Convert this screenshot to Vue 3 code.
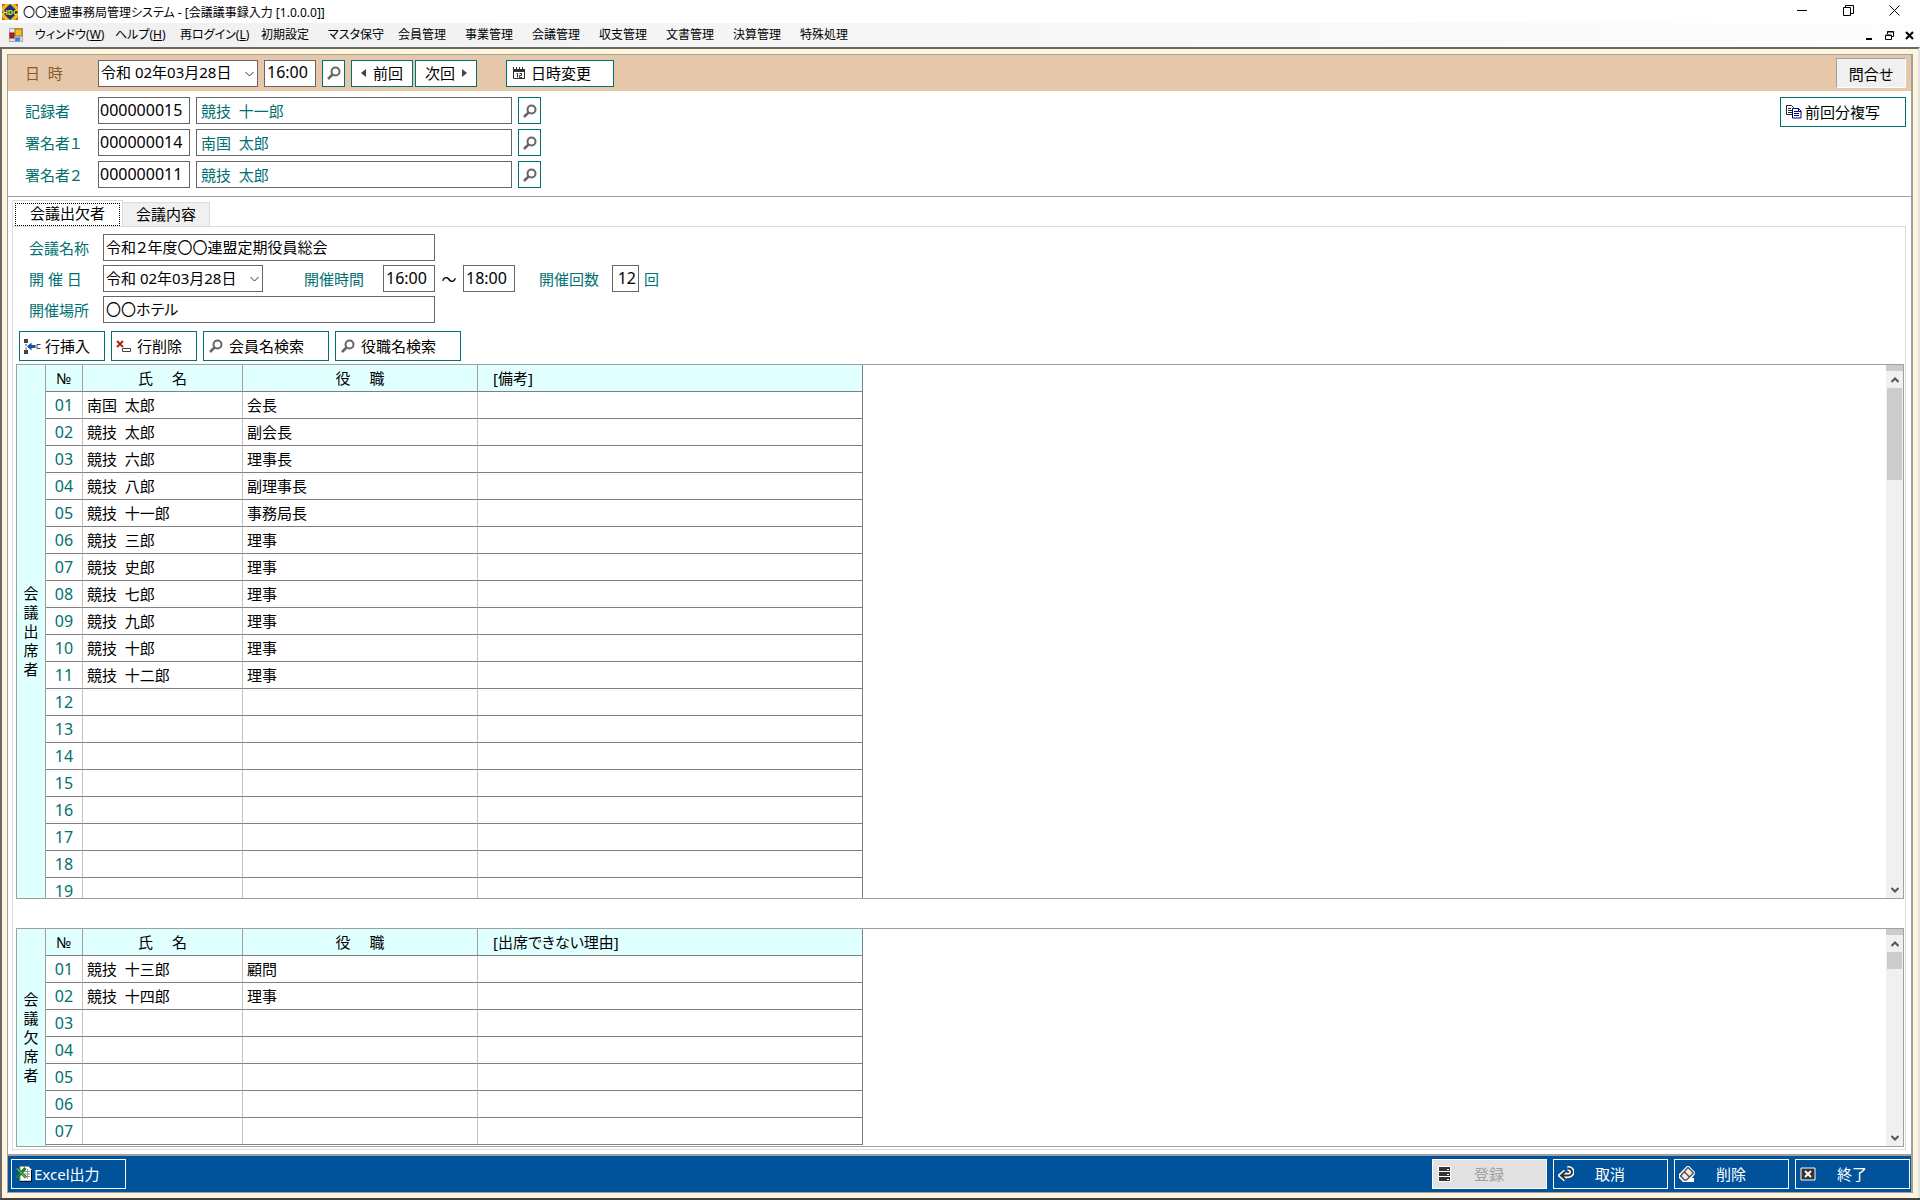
<script setup>
import { ref } from 'vue'

const menus = [
  { label: 'ウィンドウ', key: 'W' },
  { label: 'ヘルプ', key: 'H' },
  { label: '再ログイン', key: 'L' },
  { label: '初期設定' },
  { label: 'マスタ保守' },
  { label: '会員管理' },
  { label: '事業管理' },
  { label: '会議管理' },
  { label: '収支管理' },
  { label: '文書管理' },
  { label: '決算管理' },
  { label: '特殊処理' }
]

const meetingDate = ref('令和 02年03月28日')
const meetingTime = ref('16:00')

const staff = ref([
  { id: 'recorder', label: '記録者', code: '000000015', name: '競技  十一郎' },
  { id: 'signer1', label: '署名者１', code: '000000014', name: '南国  太郎' },
  { id: 'signer2', label: '署名者２', code: '000000011', name: '競技  太郎' }
])

const activeTab = ref('members')

const detail = ref({
  title: '令和２年度〇〇連盟定期役員総会',
  date: '令和 02年03月28日',
  from: '16:00',
  to: '18:00',
  count: '12',
  place: '〇〇ホテル'
})

const attendees = [
  ['南国  太郎', '会長'],
  ['競技  太郎', '副会長'],
  ['競技  六郎', '理事長'],
  ['競技  八郎', '副理事長'],
  ['競技  十一郎', '事務局長'],
  ['競技  三郎', '理事'],
  ['競技  史郎', '理事'],
  ['競技  七郎', '理事'],
  ['競技  九郎', '理事'],
  ['競技  十郎', '理事'],
  ['競技  十二郎', '理事']
]

const absentees = [
  ['競技  十三郎', '顧問'],
  ['競技  十四郎', '理事']
]

// 空行を足して指定行数にそろえる
const fillRows = (list, count) =>
  Array.from({ length: count }, (_, i) => ({
    no: String(i + 1).padStart(2, '0'),
    name: list[i]?.[0] ?? '',
    post: list[i]?.[1] ?? ''
  }))

const grids = [
  { id: 'present', title: '会議出席者', note: '[備考]', rows: fillRows(attendees, 19) },
  { id: 'absent', title: '会議欠席者', note: '[出席できない理由]', rows: fillRows(absentees, 7) }
]
</script>

<template>
  <div class="window">
    <header class="title-bar">
      <svg class="app-logo" viewBox="0 0 16 16" width="16" height="16">
        <rect width="16" height="16" fill="#f5b51e" />
        <path d="M0 0h3L0 3zM16 0v3l-3-3zM0 16v-3l3 3zM16 16h-3l3-3z" fill="#d9481c" />
        <path d="M8 0l8 8-8 8-8-8z" fill="#12337f" />
        <path d="M2 6h12v5H2z" fill="#12337f" />
        <text x="8" y="11" text-anchor="middle" font-size="7" font-weight="bold" fill="#ffe600">HDC</text>
      </svg>
      <span class="title-text">〇〇連盟事務局管理システム - [会議議事録入力 [1.0.0.0]]</span>
      <div class="window-controls">
        <button aria-label="最小化">
          <svg viewBox="0 0 11 11" width="11" height="11"><path d="M0 5.500h10" stroke="#000" /></svg>
        </button>
        <button aria-label="元に戻す">
          <svg viewBox="0 0 11 11" width="11" height="11" fill="none" stroke="#000">
            <path d="M.5 2.500h7v8h-7zM2.500 2.500v-2h8v8h-3" />
          </svg>
        </button>
        <button aria-label="閉じる">
          <svg viewBox="0 0 11 11" width="11" height="11"><path d="M.5.5l10 10M10.500.5l-10 10" stroke="#000" /></svg>
        </button>
      </div>
    </header>

    <nav class="menu-bar">
      <svg class="form-icon" viewBox="0 0 14 14" width="14" height="14">
        <rect x=".5" y=".5" width="13" height="13" fill="#e8e8e8" stroke="#aaa" />
        <rect x="6" y="1" width="7" height="7" fill="#f2bf2b" stroke="#9b7410" />
        <rect x="1" y="5" width="4" height="5" fill="#c8221b" stroke="#7e1511" />
        <rect x="6" y="9.500" width="5" height="4" fill="#3f7ee0" stroke="#7ca5e8" />
      </svg>
      <div class="menu-list">
        <button v-for="menu in menus" :key="menu.label">{{ menu.label }}<template v-if="menu.key">(<u>{{ menu.key }}</u>)</template></button>
      </div>
      <div class="child-controls">
        <button aria-label="子画面を最小化">
          <svg viewBox="0 0 9 9" width="9" height="9"><path d="M1 8h6" stroke="#000" stroke-width="2" /></svg>
        </button>
        <button aria-label="子画面を元に戻す">
          <svg viewBox="0 0 9 9" width="9" height="9" fill="none" stroke="#000">
            <path d="M.5 4.500h6v4h-6zM.5 4h6M2.500 3v-2.500h6v5h-2M2.500 1h6" />
          </svg>
        </button>
        <button aria-label="子画面を閉じる">
          <svg viewBox="0 0 9 9" width="9" height="9"><path d="M1 1l7 7M8 1l-7 7" stroke="#000" stroke-width="2" /></svg>
        </button>
      </div>
    </nav>

    <main class="mdi">
      <div class="frame">
        <section class="date-bar">
          <label for="meeting-date">日 &nbsp;時</label>
          <span class="date-select">
            <select id="meeting-date" v-model="meetingDate">
              <option>令和 02年03月28日</option>
            </select>
            <svg viewBox="0 0 9 6" width="9" height="6"><path d="M.5 1l4 4 4-4" fill="none" stroke="#333" /></svg>
          </span>
          <input v-model="meetingTime" class="box time" aria-label="時刻" />
          <button class="btn search" aria-label="日時検索">
            <svg viewBox="0 0 14 14" width="14" height="14" fill="none" stroke="#666">
              <circle cx="8.500" cy="5.500" r="4" stroke-width="2" /><path d="M5.500 8.500L1 13" stroke-width="2.500" />
            </svg>
          </button>
          <div class="pager">
            <button class="btn page-btn">
              <svg viewBox="0 0 5 8" width="5" height="8"><path d="M5 0v8L0 4z" fill="#444" /></svg>前回
            </button>
            <button class="btn page-btn">
              次回<svg viewBox="0 0 5 8" width="5" height="8"><path d="M0 0v8l5-4z" fill="#444" /></svg>
            </button>
          </div>
          <button class="btn change-btn">
            <svg viewBox="0 0 12 12" width="12" height="12">
              <path d="M.5 2.500h11v9H.5z" fill="#fff" stroke="#333" />
              <path d="M0 2h12v3H0z" fill="#333" />
              <path d="M.5 0v3M3.500 0v3M6.500 0v3M9.500 0v3" stroke="#333" />
              <path d="M3.500 6.500h1v4M6.500 6.500h2v2h-2v2h2.500" fill="none" stroke="#333" />
            </svg>日時変更
          </button>
          <button class="inquiry">問合せ</button>
        </section>

        <section class="staff-area">
          <div class="staff-list">
            <div v-for="row in staff" :key="row.id" class="staff-row">
              <label :for="row.id">{{ row.label }}</label>
              <input :id="row.id" v-model="row.code" class="box code" />
              <input v-model="row.name" class="box name" :aria-label="row.label + '氏名'" />
              <button class="btn search" :aria-label="row.label + '検索'">
                <svg viewBox="0 0 14 14" width="14" height="14" fill="none" stroke="#666">
                  <circle cx="8.500" cy="5.500" r="4" stroke-width="2" /><path d="M5.500 8.500L1 13" stroke-width="2.500" />
                </svg>
              </button>
            </div>
          </div>
          <button class="btn copy-btn">
            <svg viewBox="0 0 16 14" width="16" height="14">
              <path d="M.5.500h5l2 2v7h-7z" fill="#fff" stroke="#222" />
              <path d="M2 3.500h3M2 5.500h4M2 7.500h4" stroke="#222" />
              <path d="M6.500 3.500h6l2.500 2.500v7h-8.500z" fill="#fff" stroke="#00007b" />
              <path d="M8 6.500h4M8 8.500h5M8 10.500h5M12.500 3.500v3h2.500" fill="none" stroke="#00007b" />
            </svg>前回分複写
          </button>
        </section>

        <div class="tabs" role="tablist">
          <button role="tab" :class="{ active: activeTab === 'members' }" @click="activeTab = 'members'">
            <span>会議出欠者</span>
          </button>
          <button role="tab" :class="{ active: activeTab === 'contents' }" @click="activeTab = 'contents'">
            <span>会議内容</span>
          </button>
        </div>

        <section class="tab-page">
          <div class="fields">
            <div class="field-row">
              <label for="title">会議名称</label>
              <input id="title" v-model="detail.title" class="box wide" />
            </div>
            <div class="field-row">
              <label for="date">開 催 日</label>
              <span class="date-select">
                <select id="date" v-model="detail.date">
                  <option>令和 02年03月28日</option>
                </select>
                <svg viewBox="0 0 9 6" width="9" height="6"><path d="M.5 1l4 4 4-4" fill="none" stroke="#333" /></svg>
              </span>
              <label for="from" class="time-label">開催時間</label>
              <input id="from" v-model="detail.from" class="box time" />
              <span class="tilde">～</span>
              <input v-model="detail.to" class="box time" aria-label="終了時間" />
              <label for="count" class="count-label">開催回数</label>
              <input id="count" v-model="detail.count" class="box count" />
              <span class="unit">回</span>
            </div>
            <div class="field-row">
              <label for="place">開催場所</label>
              <input id="place" v-model="detail.place" class="box wide" />
            </div>
          </div>

          <div class="tools">
            <button class="btn row-btn">
              <svg viewBox="0 0 17 15" width="17" height="15">
                <path d="M0 0h4v4H0zM0 11h4v4H0z" fill="#444" />
                <path d="M2 5v2M2 8.500v2" stroke="#444" />
                <path d="M3 7.500l4.500-4v2.500h4v3h-4v2.500z" fill="#0b53a5" />
                <path d="M16.500 5.500h-3.500v4h3.500" fill="none" stroke="#444" />
              </svg>行挿入
            </button>
            <button class="btn row-btn">
              <svg viewBox="0 0 17 15" width="17" height="15">
                <path d="M1 2l6 6M7 2l-6 6" stroke="#a82a1a" stroke-width="2" />
                <path d="M6.500 9.500h8v3h-8z" fill="#fff" stroke="#444" />
              </svg>行削除
            </button>
            <button v-for="label in ['会員名検索', '役職名検索']" :key="label" class="btn find-btn">
              <svg viewBox="0 0 14 14" width="14" height="14" fill="none" stroke="#666">
                <circle cx="8.500" cy="5.500" r="4" stroke-width="2" /><path d="M5.500 8.500L1 13" stroke-width="2.500" />
              </svg>{{ label }}
            </button>
          </div>

          <div v-for="grid in grids" :key="grid.id" class="grid" :class="grid.id">
            <div class="grid-title"><span>{{ grid.title }}</span></div>
            <div class="grid-body">
              <table>
                <colgroup>
                  <col class="col-no" />
                  <col class="col-name" />
                  <col class="col-post" />
                  <col class="col-note" />
                </colgroup>
                <thead>
                  <tr>
                    <th class="no">№</th>
                    <th>氏　 名</th>
                    <th>役　 職</th>
                    <th class="note">{{ grid.note }}</th>
                  </tr>
                </thead>
                <tbody>
                  <tr v-for="row in grid.rows" :key="row.no">
                    <td class="no">{{ row.no }}</td>
                    <td>{{ row.name }}</td>
                    <td>{{ row.post }}</td>
                    <td></td>
                  </tr>
                </tbody>
              </table>
            </div>
            <div class="scrollbar">
              <div class="splitter"></div>
              <button aria-label="上へ">
                <svg viewBox="0 0 8 6" width="8" height="6"><path d="M.5 5L4 1.500 7.500 5" fill="none" stroke="#555" stroke-width="2" /></svg>
              </button>
              <div class="thumb"></div>
              <button class="down" aria-label="下へ">
                <svg viewBox="0 0 8 6" width="8" height="6"><path d="M.5 1L4 4.500 7.500 1" fill="none" stroke="#555" stroke-width="2" /></svg>
              </button>
            </div>
          </div>
        </section>

        <footer class="actions">
          <button class="excel">
            <svg viewBox="0 0 17 16" width="17" height="16">
              <path d="M4 .5h8.500l3 3V15H4z" fill="#fff" stroke="#999" />
              <path d="M15.500 4v11.500H4" fill="none" stroke="#111" />
              <path d="M8 5.500h6M8 8h6M8 10.500h6M11.500 3v10" stroke="#999" />
              <path d="M1 2.500l9 9M9.500 2l-9 10" stroke="#1c7a2c" stroke-width="3" />
              <path d="M1 2.500l9 9" stroke="#8fce8f" />
            </svg>Excel出力
          </button>
          <button class="entry" disabled>
            <svg viewBox="0 0 16 16" width="16" height="16">
              <path d="M1 0h13v16H1z" fill="#fff" />
              <path d="M2 1h11v4H2zM2 6h11v4H2zM2 11h11v4H2z" fill="#333" />
              <path d="M10 3.500h2M10 8.500h2M10 13.500h2" stroke="#fff" />
            </svg>
            <span>登録</span>
          </button>
          <button class="cancel">
            <svg viewBox="0 0 16 16" width="16" height="16" fill="none">
              <path d="M9.500 2.500c6-.5 6 7 .5 7H4M7.500 5.500l-4.500 4 4.500 4" stroke="#fff" stroke-width="5" />
              <path d="M9.500 2.500c6-.5 6 7 .5 7H4M7.500 5.500l-4.500 4 4.500 4" stroke="#333" stroke-width="2" />
            </svg>
            <span>取消</span>
          </button>
          <button class="delete">
            <svg viewBox="0 0 16 16" width="16" height="16">
              <path d="M8 0h2l6 6v2l-3 4h2v4H4l-4-4V8z" fill="#fff" />
              <path d="M9 1.500l5.500 5.500-7 7H5.500L1.500 10zM5 5.500l5.500 5.500" fill="#eee" stroke="#555" stroke-width="1.500" />
            </svg>
            <span>削除</span>
          </button>
          <button class="quit">
            <svg viewBox="0 0 16 16" width="16" height="16">
              <path d="M1 2h14v12H1z" fill="#333" stroke="#fff" />
              <path d="M5 5l6 6M11 5l-6 6" stroke="#fff" stroke-width="2" />
            </svg>
            <span>終了</span>
          </button>
        </footer>
      </div>
    </main>
  </div>
</template>

<style>
body {
  margin: 0;
}
</style>

<style scoped>
.window {
  display: flex;
  flex-direction: column;
  height: 100vh;
  box-sizing: border-box;
  border-bottom: 2px solid #444;
  background: #fff;
  color: #000;
  font-family: "Noto Sans", "Noto Sans CJK JP", sans-serif;
  font-size: 15px;
  font-feature-settings: "palt";
  overflow: hidden;
}

.window * {
  box-sizing: border-box;
}

button,
input,
select {
  margin: 0;
  padding: 0;
  border: 0;
  background: none;
  color: inherit;
  font: inherit;
  font-feature-settings: inherit;
  white-space: nowrap;
}

svg {
  flex: none;
  display: block;
}

.title-bar {
  display: flex;
  align-items: center;
  height: 23px;
  padding: 0 3px 0 2px;
  font-size: 12px;
}

.title-text {
  margin-left: 5px;
}

.window-controls,
.child-controls {
  display: flex;
  margin-left: auto;
}

.window-controls button {
  display: flex;
  justify-content: center;
  align-items: center;
  width: 46px;
  height: 23px;
  padding-bottom: 2px;
}

.menu-bar {
  display: flex;
  align-items: center;
  height: 24px;
  padding: 0 1px 0 9px;
  background: linear-gradient(90deg, #f0f0f0, #fdfdfd);
  font-size: 12px;
}

.menu-list {
  display: grid;
  grid-template-columns: 80px 65px 81px 67px 70px repeat(7, 67px);
  margin-left: 12px;
}

.menu-list button {
  padding-bottom: 2px;
  text-align: left;
}

.child-controls button {
  display: flex;
  justify-content: center;
  align-items: center;
  width: 20px;
  height: 20px;
}

.mdi {
  flex: 1;
  display: flex;
  min-height: 0;
  padding: 5px;
  border: 2px solid #696969;
  border-right-color: #e3e3e3;
  border-bottom: 0;
  background: #fff5dc;
}

.frame {
  flex: 1;
  display: flex;
  flex-direction: column;
  min-width: 0;
  border: 1px solid #a0a0a0;
  border-right-width: 2px;
  background: #fff;
}

.date-bar {
  display: flex;
  align-items: center;
  gap: 6px;
  height: 36px;
  padding: 0 5px 0 17px;
  background: #e6c7aa;
}

.date-bar label {
  width: 67px;
  padding-bottom: 2px;
  color: #8b5a2b;
}

.date-select {
  position: relative;
  width: 160px;
  height: 27px;
}

.date-select select {
  width: 100%;
  height: 100%;
  padding: 0 20px 2px 2px;
  border: 1px solid #666;
  border-radius: 0;
  background: #fff;
  color: #000;
  appearance: none;
}

.date-select svg {
  position: absolute;
  top: 11px;
  right: 4px;
  pointer-events: none;
}

.box {
  height: 27px;
  padding: 0 2px 2px;
  border: 1px solid #666;
  background: #fff;
  color: #000;
}

.box.time {
  width: 52px;
  font-size: 16px;
}

.btn {
  display: flex;
  align-items: center;
  height: 27px;
  padding-bottom: 2px;
  border: 1px solid #007070;
  background: #fff;
  color: #000;
}

.btn svg,
.actions svg {
  margin-top: 2px;
}

.btn.search {
  justify-content: center;
  width: 23px;
}

.pager {
  display: flex;
  gap: 2px;
}

.page-btn {
  justify-content: center;
  gap: 7px;
  width: 62px;
}

.change-btn {
  gap: 6px;
  width: 108px;
  margin-left: 23px;
  padding-left: 6px;
}

.inquiry {
  width: 70px;
  height: 30px;
  margin-left: auto;
  border: 1px solid #fff;
  border-top-color: #a0a0a0;
  border-left-color: #a0a0a0;
  background: #f0f0f0;
}

.staff-area {
  display: flex;
  justify-content: space-between;
  align-items: flex-start;
  padding: 6px 5px 8px 17px;
  border-bottom: 1px solid #a0a0a0;
  color: #007070;
}

.staff-list {
  display: flex;
  flex-direction: column;
  gap: 5px;
}

.staff-row {
  display: flex;
  align-items: center;
  gap: 6px;
}

.staff-row label {
  width: 67px;
}

.box.code {
  width: 92px;
  padding-left: 1px;
  font-size: 16px;
}

.box.name {
  width: 316px;
  padding: 0 4px;
  color: #007070;
}

.copy-btn {
  gap: 3px;
  width: 126px;
  height: 30px;
  padding-left: 5px;
}

.tabs {
  display: flex;
  align-items: flex-end;
  height: 29px;
  padding-left: 4px;
}

.tabs button {
  height: 24px;
  padding: 0 13px 2px;
  border: 1px solid #dcdcdc;
  border-bottom: 0;
  border-left: 0;
  background: #f0f0f0;
}

.tabs .active {
  height: 26px;
  padding: 2px 2px 0;
  border-left: 1px solid #dcdcdc;
  background: #fff;
}

.tabs .active span {
  display: block;
  height: 23px;
  padding: 0 14px;
  border: 1px dotted #000;
  line-height: 19px;
}

.tab-page {
  flex: 1;
  display: flex;
  flex-direction: column;
  min-height: 0;
  margin: 0 5px 4px 4px;
  padding: 7px 1px 2px 3px;
  border: 1px solid #dcdcdc;
}

.fields {
  display: flex;
  flex-direction: column;
  gap: 4px;
  padding-left: 13px;
}

.field-row {
  display: flex;
  align-items: center;
  color: #007070;
}

.field-row label {
  width: 74px;
  padding-bottom: 1px;
}

.box.wide {
  width: 332px;
}

.field-row .time-label {
  width: 79px;
  margin-left: 41px;
}

.tilde {
  width: 28px;
  color: #000;
  text-align: center;
}

.field-row .count-label {
  width: 73px;
  margin-left: 24px;
}

.box.count {
  width: 27px;
  font-size: 16px;
  text-align: right;
}

.unit {
  margin-left: 5px;
}

.tools {
  display: flex;
  gap: 6px;
  margin: 8px 0 3px;
  padding-left: 3px;
}

.tools .btn {
  height: 30px;
}

.row-btn {
  gap: 4px;
  width: 86px;
  padding-left: 4px;
}

.find-btn {
  gap: 6px;
  width: 126px;
  padding-left: 5px;
}

.grid {
  flex: 1;
  display: flex;
  min-height: 0;
  border: 1px solid #a0a0a0;
}

.grid.absent {
  flex: none;
  height: 219px;
  margin-top: 29px;
}

.grid-title {
  display: flex;
  justify-content: center;
  align-items: center;
  width: 29px;
  border-right: 1px solid #a0a0a0;
  background: #e0ffff;
}

.grid-title span {
  width: 15px;
  line-height: 19px;
  word-break: break-all;
}

.grid-body {
  flex: 1;
  min-width: 0;
  overflow: hidden;
}

table {
  width: 817px;
  table-layout: fixed;
  border-spacing: 0;
}

.col-no {
  width: 37px;
}

.col-name {
  width: 160px;
}

.col-post {
  width: 235px;
}

.col-note {
  width: 385px;
}

th,
td {
  height: 27px;
  padding: 0 0 0 4px;
  border-right: 1px solid #c0c0c0;
  border-bottom: 1px solid #808080;
  font-weight: normal;
  line-height: 20px;
  white-space: pre;
}

th {
  padding: 0;
  border-right-color: #a0a0a0;
  background: #e0ffff;
}

th:last-child,
td:last-child {
  border-right-color: #808080;
}

.note {
  padding-left: 15px;
  text-align: left;
}

.no {
  padding: 0;
  text-align: center;
}

td.no {
  color: #007070;
  font-size: 16px;
}

.scrollbar {
  display: flex;
  flex-direction: column;
  width: 17px;
  background: #f0f0f0;
}

.splitter {
  height: 6px;
  background: #ccc;
}

.scrollbar button {
  display: flex;
  justify-content: center;
  align-items: center;
  height: 17px;
}

.scrollbar .down {
  margin-top: auto;
}

.thumb {
  height: 92px;
  margin: 0 1px;
  background: #cdcdcd;
}

.absent .thumb {
  height: 17px;
}

.actions {
  display: flex;
  align-items: center;
  gap: 6px;
  height: 38px;
  padding: 0 1px 0 3px;
  border-top: 2px solid #a0a0a0;
  background: #00529b;
}

.actions button {
  display: flex;
  align-items: center;
  width: 115px;
  height: 30px;
  padding: 0 0 2px 4px;
  border: 1px solid #fff;
  color: #fff;
}

.actions span {
  margin-left: 21px;
}

.actions .excel {
  gap: 1px;
  margin-right: auto;
}

.actions .entry {
  background: #e1e1e1;
  color: #a0a0a0;
}
</style>
